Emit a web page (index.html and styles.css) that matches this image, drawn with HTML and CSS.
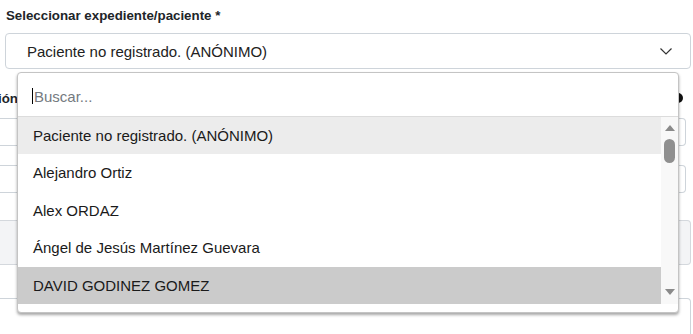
FILE: index.html
```html
<!DOCTYPE html>
<html lang="es">
<head>
  <meta charset="UTF-8">
  <meta name="viewport" content="width=device-width, initial-scale=1.0">
  <title>Seleccionar paciente</title>
  <link rel="stylesheet" href="styles.css">
</head>
<body>
  <div class="form">
    <label class="field-label">Seleccionar expediente/paciente *</label>
    <div class="select">
      <span>Paciente no registrado. (ANÓNIMO)</span>
      <svg class="chevron" width="12" height="7" viewBox="0 0 12 7"><path d="M0.5 0.5 L6 6 L11.5 0.5" fill="none" stroke="#333" stroke-width="1.2"/></svg>
    </div>

    <!-- campos de fondo, tapados por el desplegable -->
    <div class="behind">
      <div class="behind-head">
        <span class="cut-label">Ubicación</span>
        <span class="info-dot"></span>
      </div>
      <div class="input short"></div>
      <div class="input short second"></div>
      <div class="input grey"></div>
      <div class="input last"></div>
    </div>

    <div class="dropdown">
      <div class="search">
        <span class="caret"></span><span class="placeholder">Buscar...</span>
      </div>
      <div class="list">
        <ul class="options">
          <li class="hover">Paciente no registrado. (ANÓNIMO)</li>
          <li>Alejandro Ortiz</li>
          <li>Alex ORDAZ</li>
          <li>Ángel de Jesús Martínez Guevara</li>
          <li class="active">DAVID GODINEZ GOMEZ</li>
        </ul>
        <div class="scrollbar">
          <span class="arrow up"></span>
          <span class="thumb"></span>
          <span class="arrow down"></span>
        </div>
      </div>
    </div>
  </div>
</body>
</html>
```

FILE: styles.css
```css
body {
  margin: 0;
  font-family: "Liberation Sans", Arial, sans-serif;
  color: #212529;
  background: #fff;
  overflow: hidden;
}
.form {
  position: relative;
  padding: 8px 2px 0 5px;
}
.field-label {
  display: block;
  font-weight: bold;
  font-size: 13.3px;
  line-height: 16px;
  margin-left: 1px;
  margin-bottom: 9px;
}
.select {
  display: flex;
  align-items: center;
  justify-content: space-between;
  height: 34px;
  border: 1px solid #ced4da;
  border-radius: 4px;
  padding: 0 18px 0 21px;
  font-size: 15px;
  color: #222;
}
.chevron {
  margin-top: 1px;
}
.behind {
  margin-left: -5px;
  margin-right: -2px;
  padding-top: 21px;
}
.behind-head {
  display: flex;
  align-items: center;
  justify-content: space-between;
  height: 16px;
  padding-right: 10px;
}
.cut-label {
  display: block;
  width: 18px;
  overflow: hidden;
  direction: rtl;
  white-space: nowrap;
  font-weight: bold;
  font-size: 13.3px;
}
.info-dot {
  width: 10px;
  height: 10px;
  border-radius: 50%;
  background: #111;
}
.input {
  height: 26px;
  border: 1px solid #ced4da;
  border-left: 0;
  border-radius: 0 4px 4px 0;
}
.input.short {
  margin-top: 12px;
  margin-right: 7px;
}
.input.second {
  margin-top: 19px;
}
.input.grey {
  height: 43px;
  margin-top: 27px;
  margin-right: 2px;
  background: #f3f4f6;
  border-color: #d4d8dd;
}
.input.last {
  height: 40px;
  margin-top: 33px;
  margin-right: 2px;
}
.dropdown {
  position: absolute;
  left: 17px;
  top: 72px;
  width: 660px;
  height: 239px;
  background: #fff;
  border: 1px solid #c4c4c4;
  border-radius: 4px;
  box-shadow: 0 2px 3px rgba(0, 0, 0, 0.35);
}
.search {
  display: flex;
  align-items: center;
  height: 43px;
  padding-left: 14px;
  border-bottom: 1px solid #dcdcdc;
  font-size: 15px;
}
.caret {
  width: 1px;
  height: 16px;
  background: #000;
  margin-right: 1px;
  margin-top: 3px;
}
.placeholder {
  color: #757a80;
  margin-top: 4px;
}
.list {
  display: flex;
  height: 187px;
}
.options {
  flex: 1;
  margin: 0;
  padding: 0;
  list-style: none;
  font-size: 15px;
  color: #1a1a1a;
}
.options li {
  height: 37.4px;
  line-height: 37px;
  padding-left: 15px;
}
.options li.hover {
  background: #ececec;
}
.options li.active {
  background: #cbcbcb;
}
.scrollbar {
  position: relative;
  width: 17px;
  background: #f8f8f8;
}
.arrow {
  position: absolute;
  left: 4px;
  width: 0;
  height: 0;
  border-left: 5px solid transparent;
  border-right: 5px solid transparent;
}
.arrow.up {
  top: 8px;
  border-bottom: 6px solid #8a8a8a;
}
.arrow.down {
  bottom: 9px;
  border-top: 6px solid #8a8a8a;
}
.thumb {
  position: absolute;
  left: 3px;
  top: 22px;
  width: 11px;
  height: 24px;
  border-radius: 6px;
  background: #8f8f8f;
}
```
